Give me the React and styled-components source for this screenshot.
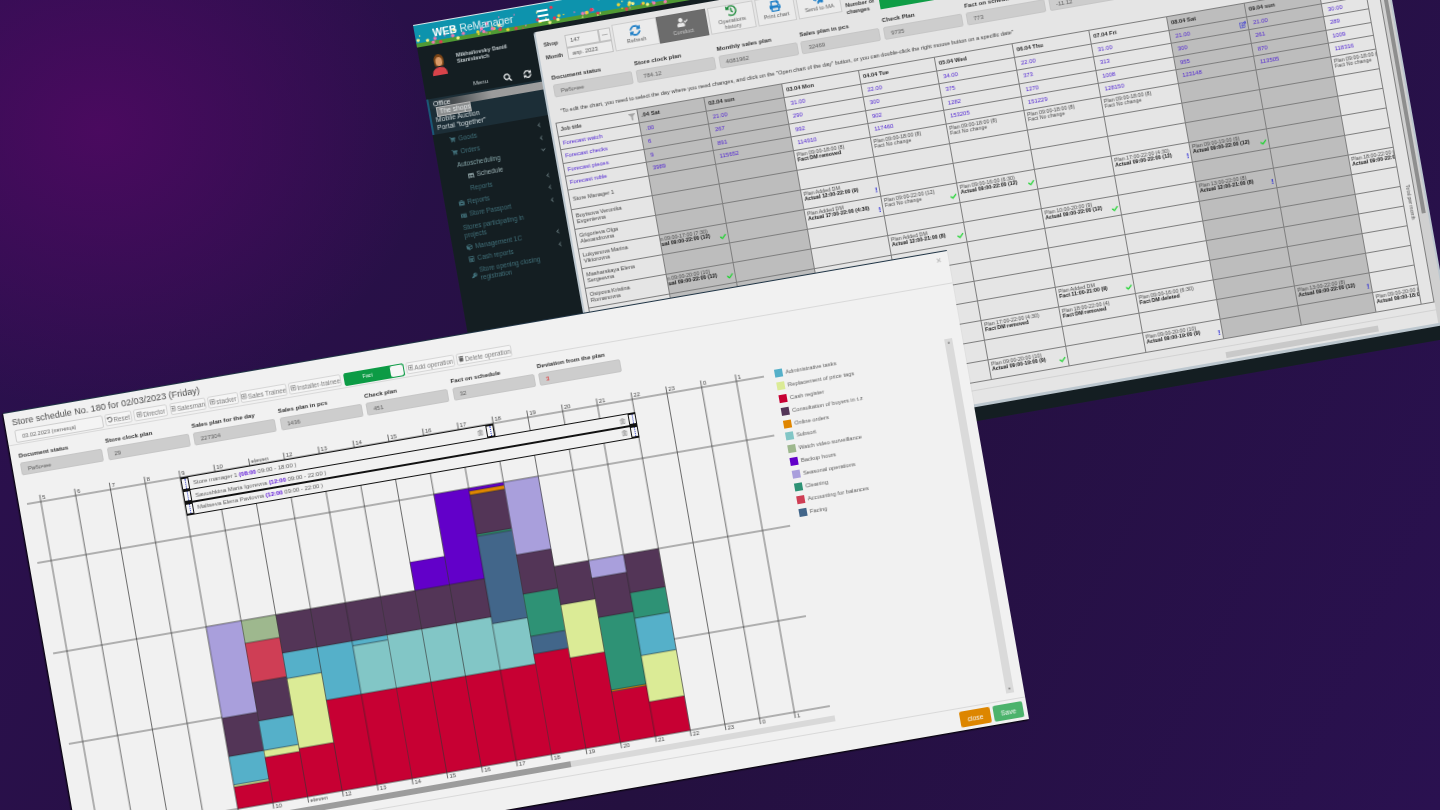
import React from 'react';
import styled, { createGlobalStyle } from 'styled-components';
import {
  FaBriefcase, FaCalculator, FaCheck, FaChevronDown, FaChevronLeft, FaCube, FaFilter, FaHistory, FaIdCard, FaKey,
  FaPaperPlane, FaPrint, FaRegEdit, FaRegPlusSquare, FaRegTrashAlt, FaSearch, FaShoppingCart, FaSyncAlt, FaTable,
  FaTrash, FaUndoAlt, FaUserCheck,
} from 'react-icons/fa';

// maps a w x h box onto a four corner quad (the windows lie tilted on the canvas)
const quadMatrix = (w, h, [x0, y0, x1, y1, x2, y2, x3, y3]) => {
  const dx1 = x1 - x2, dx2 = x3 - x2, sx = x0 - x1 + x2 - x3;
  const dy1 = y1 - y2, dy2 = y3 - y2, sy = y0 - y1 + y2 - y3;
  const den = dx1 * dy2 - dx2 * dy1;
  const g = (sx * dy2 - dx2 * sy) / den;
  const k = (dx1 * sy - sx * dy1) / den;
  const a = x1 - x0 + g * x1, b = x3 - x0 + k * x3;
  const d = y1 - y0 + g * y1, e = y3 - y0 + k * y3;
  return `matrix3d(${a / w},${d / w},0,${g / w},${b / h},${e / h},0,${k / h},0,0,1,0,${x0},${y0},0,1)`;
};

const BACK_W = 968;
const BACK_H = 488;
const FRONT_W = 957;
const FRONT_H = 478;
const backMatrix = quadMatrix(BACK_W, BACK_H, [413, 25, 1366, -141, 1451, 338, 498, 505]);
const frontMatrix = quadMatrix(FRONT_W, FRONT_H, [3, 413, 946.7, 250, 1029, 719, 85, 883]);

const GlobalStyle = createGlobalStyle`
  html, body { margin: 0; height: 100%; overflow: hidden; }
  body { font-family: "Liberation Sans", Arial, sans-serif; }
  * { box-sizing: border-box; }
`;

const Desktop = styled.div`
  position: relative;
  width: 100vw;
  height: 100vh;
  overflow: hidden;
  background:
    radial-gradient(ellipse 330px 280px at 100px 130px, #4a0a5f 0%, rgba(74, 10, 95, 0) 100%),
    linear-gradient(115deg, #2c1050 0%, #24103f 55%, #2a1150 100%);
`;

const BackWindow = styled.div`
  position: absolute;
  left: 0;
  top: 0;
  width: ${BACK_W}px;
  height: ${BACK_H}px;
  transform-origin: 0 0;
  transform: ${backMatrix};
  filter: blur(0.3px);
  background: #141e22;
  display: flex;
  flex-direction: column;
`;

const HeaderBar = styled.div`
  position: relative;
  height: 23px;
  flex: none;
  overflow: hidden;
  background: #0d93ad;
  border-top: 1px solid #d8e6e8;
  display: flex;
  align-items: flex-start;
`;

const Meadow = styled.svg`
  position: absolute;
  left: 0;
  bottom: 0;
`;

const Brand = styled.div`
  position: relative;
  margin: 4px 0 0 18px;
  width: 106px;
  font-size: 10.4px;
  line-height: 14px;
  color: #e4f1f4;
  white-space: nowrap;
  b { font-weight: 700; color: #fff; }
`;

const Burger = styled.div`
  position: relative;
  margin-top: 6px;
  width: 11px;
  height: 12px;
  display: flex;
  flex-direction: column;
  justify-content: space-between;
  span { display: block; height: 2.4px; background: #fff; }
`;

const Main = styled.div`
  display: flex;
  height: 451px;
  flex: none;
`;

const Sidebar = styled.div`
  width: 117px;
  flex: none;
  background: #141e22;
`;

const UserBlock = styled.div`
  display: flex;
  height: 37px;
  padding: 9px 0 0 10px;
  gap: 10px;
`;

const NameText = styled.div`
  font-size: 5.6px;
  line-height: 6.4px;
  font-weight: 700;
  color: #c4cdd0;
  padding-top: 2px;
`;

const MenuBar = styled.div`
  height: 16px;
  display: flex;
  align-items: center;
  padding-left: 49px;
  font-size: 6px;
  color: #c4cdd0;
  span { width: 31px; }
  svg { color: #eef1f2; font-size: 8px; }
  svg + svg { margin-left: 12px; }
`;

const OfficeGroup = styled.div`
  height: 36px;
  padding-left: 4px;
  background: #1c2e37;
  border-left: 2px solid #1a5776;
  font-size: 6.8px;
  line-height: 7.9px;
  color: #d0d8db;
  padding-top: 2px;
`;

const OfficeLine = styled.div`
  margin-left: -4px;
  padding-left: 4px;
  background: linear-gradient(90deg, #1c2e37 0%, #4a4f52 22%, #9b9b9b 55%, #9e9e9e 100%);
  color: #e2e6e8;
`;

const ShopsLine = styled.div`
  margin-left: 3px;
  padding-left: 2px;
  width: 33px;
  white-space: nowrap;
  background: #8a8d8e;
  color: #e8ebec;
  outline: 0.5px solid #b5b5b5;
`;

const NavGap = styled.div`
  height: 2px;
`;

const NavItem = styled.div`
  display: flex;
  align-items: center;
  height: ${(p) => p.$h || 12.7}px;
  padding-left: ${(p) => p.$indent}px;
  padding-right: 8px;
  font-size: 6.4px;
  line-height: 8px;
  color: ${(p) => p.$color || '#41707a'};
  > svg { flex: none; font-size: 5.8px; margin-right: 3px; }
  span { flex: 1; }
`;

const NavChevron = styled.i`
  display: flex;
  font-size: 5px;
  color: #73868a;
`;

const Content = styled.div`
  position: relative;
  flex: 1;
  display: flex;
  margin-top: 5px;
  background: #e5e5e5;
  border-top-left-radius: 3px;
  border-left: 2px solid #bcc7cf;
  border-bottom: 3px solid #bcc7cf;
  border-right: 2px solid #bcc7cf;
`;

const ContentMain = styled.div`
  flex: 1;
  min-width: 0;
`;

const ToolRow = styled.div`
  display: flex;
  align-items: flex-end;
  height: 33px;
  padding-left: 6px;
`;

const ShopForm = styled.div`
  display: grid;
  grid-template-columns: 22px 24px 10px 12px;
  grid-auto-rows: 12.5px;
  width: 68px;
  margin-right: 2px;
  font-size: 5.8px;
  font-weight: 700;
  color: #333;
  align-items: center;
`;

const TinyInput = styled.div`
  grid-column: ${(p) => p.$col};
  height: 100%;
  display: flex;
  align-items: center;
  justify-content: ${(p) => (p.$center ? 'center' : 'flex-start')};
  padding-left: ${(p) => (p.$center ? 0 : 4)}px;
  border: 1px solid #c2c2c2;
  background: #ececec;
  font-weight: 400;
  color: #555;
`;

const ToolButton = styled.div`
  width: ${(p) => p.$w}px;
  height: 27px;
  flex: none;
  display: flex;
  flex-direction: column;
  align-items: center;
  justify-content: center;
  gap: 2px;
  margin-right: ${(p) => p.$gap || 0}px;
  border: 1px solid ${(p) => (p.$dark ? '#6a6a6a' : '#cdcdcd')};
  background: ${(p) => (p.$dark ? '#6c6c6c' : '#ebebeb')};
  color: ${(p) => (p.$dark ? '#c8c8c8' : '#5f5f5f')};
  font-size: 5.7px;
  line-height: 5.6px;
  text-align: center;
  svg { font-size: 11px; color: ${(p) => p.$tone}; flex: none; }
`;

const ChangesLabel = styled.div`
  width: 34px;
  margin: 0 0 -4px 4px;
  flex: none;
  font-size: 5.8px;
  line-height: 6.4px;
  font-weight: 700;
  color: #333;
`;

const GreenPill = styled.div`
  width: 65px;
  height: 14px;
  margin-bottom: -4px;
  background: #0f9d46;
`;

const FieldRow = styled.div`
  display: flex;
  gap: ${(p) => p.$gap}px;
  margin: ${(p) => p.$top}px 0 0 ${(p) => p.$left}px;
`;

const Field = styled.div`
  width: ${(p) => p.$w}px;
  flex: none;
`;

const FieldLabel = styled.div`
  height: 8px;
  line-height: 8px;
  font-size: 6.2px;
  font-weight: 700;
  color: #2e2e2e;
  margin-bottom: 3px;
  white-space: nowrap;
`;

const FieldBox = styled.div`
  height: 13px;
  padding-left: 6px;
  display: flex;
  align-items: center;
  border-radius: 2px;
  border: 1px solid #c6c6c6;
  background: #cdcdcd;
  font-size: 6px;
  color: ${(p) => p.$color || '#5c5c5c'};
`;

const HintText = styled.div`
  margin: 10px 0 0 11px;
  font-size: 5.64px;
  line-height: 8px;
  color: #383838;
  white-space: nowrap;
`;

const Table = styled.table`
  border-collapse: collapse;
  table-layout: fixed;
  width: 834px;
  margin: 7px 0 0 4px;
  font-size: 5.5px;
  td { border: 0.7px solid #7e7e7e; padding: 0; height: 20px; }
  td.slim { height: 13.5px; }
`;

const DayHead = styled.td`
  background: ${(p) => (p.$off ? '#bdbdbd' : '#e5e5e5')};
  font-size: 5.8px;
  font-weight: 700;
  color: #262626;
  padding-left: 3px !important;
  overflow: hidden;
  white-space: nowrap;
`;

const JobCell = styled.td`
  position: relative;
  padding-left: 3px !important;
  background: #e5e5e5;
  font-size: ${(p) => (p.$link ? 5.9 : 5.6)}px;
  line-height: 6.4px;
  font-weight: ${(p) => (p.$bold ? 700 : 400)};
  color: ${(p) => (p.$link ? '#4c1fd2' : '#454545')};
  overflow: hidden;
  white-space: pre-line;
  svg { position: absolute; right: 2px; top: 3px; color: #a5a5a5; font-size: 7px; }
`;

const NumCell = styled.td`
  position: relative;
  background: ${(p) => (p.$off ? '#bdbdbd' : '#e5e5e5')};
  padding-left: 5px !important;
  font-size: 5.9px;
  color: #4c1fd2;
  overflow: hidden;
  white-space: nowrap;
  svg { position: absolute; right: 1px; top: 3px; color: #2a2ad4; font-size: 7px; }
`;

const ShiftCell = styled.td`
  position: relative;
  vertical-align: top;
  background: ${(p) => (p.$off ? '#bdbdbd' : '#e5e5e5')};
  overflow: hidden;
  white-space: nowrap;
`;

const ShiftText = styled.div`
  margin: 2px 0 0 ${(p) => (p.$cut ? -8 : 2)}px;
  font-size: 5.3px;
  line-height: 5.9px;
  color: #4a4a4a;
  b { display: block; font-weight: ${(p) => (p.$plain ? 400 : 700)}; color: ${(p) => (p.$plain ? '#4a4a4a' : '#111')}; }
`;

const OkMark = styled(FaCheck)`
  position: absolute;
  right: 1.5px;
  bottom: 3px;
  font-size: 6.4px;
  color: #17d42a;
`;

const WarnMark = styled.span`
  position: absolute;
  right: 1.5px;
  bottom: 3px;
  font-size: 7.5px;
  line-height: 7px;
  font-weight: 700;
  color: #2424d8;
`;

const TotalCell = styled.td`
  position: relative;
  background: #e5e5e5;
`;

const TotalText = styled.span`
  position: absolute;
  left: 4px;
  top: 207px;
  writing-mode: vertical-rl;
  font-size: 5.2px;
  color: #555;
  white-space: nowrap;
`;

const FootRule = styled.div`
  margin-top: 7px;
  border-top: 1px solid #d2d2d2;
`;

const BackThumb = styled.div`
  width: 155px;
  height: 6px;
  margin: 5px 0 0 624px;
  background: #c9c9c9;
`;

const BackTrack = styled.div`
  width: 9px;
  flex: none;
  background: #d0d0d0;
  padding-left: 3px;
  div { width: 4px; height: 332px; background: #8e8e8e; }
`;

// the dialog on top
const FrontWindow = styled.div`
  position: absolute;
  left: 0;
  top: 0;
  width: ${FRONT_W}px;
  height: ${FRONT_H}px;
  transform-origin: 0 0;
  transform: ${frontMatrix};
  filter: blur(0.3px);
  background: #f1f1f1;
  border-top: 1px solid #1f3445;
  box-shadow: -1px 1px 1.5px #000;
  display: flex;
  flex-direction: column;
`;

const CloseX = styled.span`
  position: absolute;
  right: 7px;
  top: 3px;
  font-size: 9px;
  line-height: 10px;
  color: #a9a9a9;
`;

const TopBar = styled.div`
  height: 33px;
  flex: none;
  display: flex;
  align-items: flex-end;
  padding: 0 0 1px 8px;
  border-bottom: 1px solid #d9d9d9;
  gap: 2px;
`;

const TitleBlock = styled.div`
  width: 89px;
  flex: none;
`;

const Title = styled.div`
  font-size: 9.1px;
  line-height: 11px;
  color: #4a4a4a;
  white-space: nowrap;
  margin: 0 0 2px -1px;
`;

const DateInput = styled.div`
  height: 13px;
  padding-left: 6px;
  display: flex;
  align-items: center;
  border: 1px solid #cfcfcf;
  border-radius: 2px;
  background: #f4f4f4;
  font-size: 5.6px;
  color: #666;
`;

const RoleRow = styled.div`
  display: flex;
  gap: 2.3px;
  align-items: flex-start;
  height: 13px;
`;

const RoleButton = styled.div`
  width: ${(p) => p.$w}px;
  height: 12px;
  flex: none;
  display: flex;
  align-items: center;
  justify-content: center;
  gap: 1px;
  border: 1px solid #d6d6d6;
  border-radius: 2px;
  background: #f5f5f5;
  font-size: 6.3px;
  color: #7c7c7c;
  white-space: nowrap;
  overflow: hidden;
  svg { font-size: 5.6px; flex: none; color: #5f5f5f; }
`;

const FactToggle = styled.div`
  width: 61px;
  height: 12.5px;
  flex: none;
  display: flex;
  align-items: center;
  border: 1px solid #0c9b45;
  border-radius: 2px;
  background: #0c9b45;
  font-size: 5.2px;
  color: #eaf7ee;
  span { flex: 1; text-align: center; }
  i { display: block; width: 13px; height: 10.5px; background: #f6f6f6; border-radius: 2px; }
`;

const Body = styled.div`
  position: relative;
  flex: 1;
  min-height: 0;
  margin-top: 7px;
  display: flex;
`;

const ChartColumn = styled.div`
  position: relative;
  width: 766px;
  flex: none;
`;

const ChartSvg = styled.svg`
  display: block;
  text { font-family: "Liberation Sans", Arial, sans-serif; font-size: 6px; fill: #4a4a4a; }
`;

const HScroll = styled.div`
  position: relative;
  height: 6px;
  margin: -3px 0 0 8px;
  background: #d9d9d9;
  div { position: absolute; left: 160px; top: 0; width: 330px; height: 6px; background: #9c9c9c; }
`;

const RowStack = styled.div`
  position: absolute;
  left: 163px;
  top: ${(p) => p.$top}px;
`;

const StaffRow = styled.div`
  display: flex;
  align-items: center;
  width: ${(p) => p.$w}px;
  height: 13.6px;
  background: #f1f1f1;
  border-top: 0.8px solid #111;
  border-bottom: 0.8px solid #111;
  margin-bottom: -0.8px;
  font-size: 6px;
  color: #5c5c5c;
  white-space: nowrap;
  b { color: #5a10d8; }
  span { flex: 1; padding-left: 4px; }
  > svg { flex: none; font-size: 6px; color: #808080; margin-right: 3px; }
`;

const Grip = styled.div`
  width: 8px;
  align-self: stretch;
  flex: none;
  border: 0.8px solid #111;
  background: #f6f6f6;
  display: flex;
  justify-content: center;
  &::after { content: ''; border-left: 1.4px dotted #2f3fc8; }
`;

const Legend = styled.div`
  width: 160px;
  flex: none;
  padding-top: 14.5px;
`;

const LegendItem = styled.div`
  display: flex;
  align-items: center;
  gap: 3px;
  height: 12.9px;
  font-size: 5.8px;
  color: #5c5c5c;
  white-space: nowrap;
  i { display: block; width: 8px; height: 8px; background: ${(p) => p.$color}; }
`;

const VScroll = styled.div`
  width: 8px;
  flex: none;
  margin: 16px 0 6px 13px;
  background: #dadada;
  display: flex;
  flex-direction: column;
  justify-content: space-between;
  align-items: center;
  font-size: 4px;
  line-height: 8px;
  color: #777;
`;

const Footer = styled.div`
  flex: none;
  display: flex;
  justify-content: flex-end;
  gap: 3px;
  padding: 3px 4px 3px;
  border-top: 1px solid #d9d9d9;
`;

const FootButton = styled.div`
  width: ${(p) => p.$w}px;
  height: 16px;
  display: flex;
  align-items: center;
  justify-content: center;
  border-radius: 2px;
  background: ${(p) => p.$bg};
  font-size: 6.8px;
  color: #f6f6f6;
`;

const flowers = Array.from({ length: 300 }, (_, i) => {
  const r = (n) => { const s = Math.sin(i * 12.9898 + n * 78.233) * 43758.5453; return s - Math.floor(s); };
  return {
    x: r(1) * BACK_W,
    y: r(2) < 0.82 ? 14 + r(3) * 7 : 2 + r(3) * 11,
    color: ['#e23a55', '#e6d23a', '#f07ab0', '#f4f08a'][Math.floor(r(4) * 4)],
    big: r(5) > 0.45 ? 1.7 : 0.8,
  };
});

const navItems = [
  { label: 'Goods', indent: 16, Icon: FaShoppingCart, more: 'left' },
  { label: 'Orders', indent: 16, Icon: FaShoppingCart, more: 'left' },
  { label: 'Autoscheduling', indent: 19, color: '#84a3a6', more: 'down' },
  { label: 'Schedule', indent: 28, color: '#9db2b5', Icon: FaTable },
  { label: 'Reports', indent: 28, more: 'left' },
  { label: 'Reports', indent: 14, Icon: FaBriefcase, more: 'left' },
  { label: 'Store Passport', indent: 14, Icon: FaIdCard, more: 'left' },
  { label: ['Stores participating in', 'projects'], indent: 14, h: 19.5 },
  { label: 'Management 1C', indent: 14, Icon: FaCube, more: 'left' },
  { label: 'Cash reports', indent: 14, Icon: FaCalculator, more: 'left' },
  { label: ['Store opening closing', 'registration'], indent: 14, Icon: FaKey, h: 19.5 },
];

const backFields = [
  ['Document status', 'Рабочее'], ['Store clock plan', '784.12'], ['Monthly sales plan', '4081962'], ['Sales plan in pcs', '32469'],
  ['Check Plan', '9735'], ['Fact on schedule', '773'], ['Deviation from the plan', '-11.12'],
];

const frontFields = [
  ['Document status', 'Рабочее'], ['Store clock plan', '29'], ['Sales plan for the day', '227304'], ['Sales plan in pcs', '1436'],
  ['Check plan', '451'], ['Fact on schedule', '32'], ['Deviation from the plan', '3', '#e01818'],
];

const colWidths = [82, 68, 79, 78, 77, 79, 78, 79, 79, 76, 46, 13];
const days = ['01.04 Sat', '02.04 sun', '03.04 Mon', '04.04 Tue', '05.04 Wed', '06.04 Thu', '07.04 Fri', '08.04 Sat', '09.04 sun', '10.04 Mon'];
const offDays = [0, 1, 7, 8];

const forecast = [
  ['Forecast watch', '21.00', '21.00', '31.00', '22.00', '34.00', '22.00', '31.00', '21.00', '21.00', '30.00'],
  ['Forecast checks', '316', '267', '290', '300', '375', '373', '313', '300', '261', '289'],
  ['Forecast pieces', '919', '891', '992', '902', '1282', '1270', '1008', '955', '870', '1009'],
  ['Forecast ruble', '113989', '115652', '114910', '117460', '153205', '151229', '128150', '123148', '113505', '118316'],
];

const staff = [
  'Store Manager 1', 'Boytsova Veronika\nEvgenievna', 'Grigorieva Olga\nAlexandrovna', 'Lukyanova Marina\nViktorovna',
  'Masharskaya Elena\nSergeevna', 'Osipova Kristina\nRomanovna', '', '', '', '', '', '', '',
];

const noChange = ['Plan 09:00-18:00 (8)', 'Fact No change', null, true];
const shifts = {
  '0-2': ['Plan 09:00-18:00 (8)', 'Fact DM removed'],
  '0-3': noChange, '0-4': noChange, '0-5': noChange, '0-6': noChange, '0-9': noChange,
  '2-2': ['Plan Added DM', 'Actual 12:00-22:00 (9)', 'warn'],
  '3-0': ['Plan 09:00-17:00 (7:30)', 'Actual 09:00-22:00 (12)', 'ok'],
  '3-2': ['Plan Added DM', 'Actual 17:00-22:00 (4:30)', 'warn'],
  '3-3': ['Plan 09:00-22:00 (12)', 'Fact No change', 'ok', true],
  '3-4': ['Plan 09:00-16:00 (6:30)', 'Actual 09:00-22:00 (12)', 'ok'],
  '3-6': ['Plan 17:00-22:00 (4:30)', 'Actual 09:00-22:00 (12)', 'warn'],
  '3-7': ['Plan 09:00-19:00 (9)', 'Actual 09:00-22:00 (12)', 'ok'],
  '5-0': ['Plan 09:00-20:00 (10)', 'Actual 09:00-22:00 (12)', 'ok'],
  '5-3': ['Plan Added DM', 'Actual 12:00-21:00 (8)', 'ok'],
  '5-5': ['Plan 10:00-20:00 (9)', 'Actual 09:00-22:00 (12)', 'ok'],
  '5-7': ['Plan 13:00-22:00 (8)', 'Actual 12:00-21:00 (8)', 'warn'],
  '5-9': ['Plan 18:00-22:00 (4)', 'Actual 09:00-22:00 (12)'],
  '9-5': ['Plan Added DM', 'Fact 11:00-21:00 (9)', 'ok'],
  '10-4': ['Plan 17:00-22:00 (4:30)', 'Fact DM removed'],
  '10-5': ['Plan 18:00-22:00 (4)', 'Fact DM removed'],
  '10-6': ['Plan 09:00-16:00 (6:30)', 'Fact DM deleted'],
  '11-8': ['Plan 13:00-22:00 (8)', 'Actual 09:00-22:00 (12)', 'warn'],
  '12-4': ['Plan 09:00-20:00 (10)', 'Actual 09:00-19:00 (9)', 'ok'],
  '12-6': ['Plan 09:00-20:00 (10)', 'Actual 09:00-19:00 (9)', 'warn'],
  '12-9': ['Plan 09:00-20:00 (10)', 'Actual 09:00-18:00 (9)'],
};

const tone = {
  admin: '#55b0c9', tags: '#dbeb96', cash: '#c70033', consult: '#533557', online: '#e08600', subsort: '#82c6c6',
  video: '#9eb88e', backup: '#6200c9', season: '#a99fdc', clean: '#2e9275', balance: '#cf3e55', facing: '#42668a',
};

const legend = [
  ['Administrative tasks', tone.admin], ['Replacement of price tags', tone.tags], ['Cash register', tone.cash],
  ['Consultation of buyers in t.z', tone.consult], ['Online orders', tone.online], ['Subsort', tone.subsort],
  ['Watch video surveillance', tone.video], ['Backup hours', tone.backup], ['Seasonal operations', tone.season],
  ['Cleaning', tone.clean], ['Accounting for balances', tone.balance], ['Facing', tone.facing],
];

const CHART_TOP = 72;
const BASE = 431;
const hourX = (i) => 22 + 35.25 * i;
const hourName = (i) => { const h = (5 + i) % 24; return h === 11 ? 'eleven' : String(h); };

// hour index -> [colour, top edge, bottom edge] measured on the window
const bars = [
  [4, [['season', 246, 339], ['consult', 339, 378], ['admin', 378, 407], ['tags', 407, 409], ['cash', 409, BASE]]],
  [5, [['video', 246, 269], ['balance', 269, 309], ['consult', 309, 348], ['admin', 348, 378], ['tags', 378, 385], ['cash', 385, BASE]]],
  [6, [['consult', 246, 285], ['admin', 285, 311], ['tags', 311, 382], ['cash', 382, BASE]]],
  [7, [['consult', 246, 285], ['admin', 285, 339], ['cash', 339, BASE]]],
  [8, [['consult', 246, 285], ['admin', 285, 290], ['subsort', 290, 339], ['cash', 339, BASE]]],
  [9, [['consult', 246, 285], ['subsort', 285, 339], ['cash', 339, BASE]]],
  [10, [['backup', 217, 246], ['consult', 246, 285], ['subsort', 285, 339], ['cash', 339, BASE]]],
  [11, [['backup', 154, 246], ['consult', 246, 285], ['subsort', 285, 339], ['cash', 339, BASE]]],
  [12, [['backup', 154, 157], ['online', 157, 161], ['consult', 161, 201], ['clean', 201, 203], ['facing', 203, 292], ['subsort', 292, 339], ['cash', 339, BASE]]],
  [13, [['season', 154, 228], ['consult', 228, 268], ['clean', 268, 311], ['facing', 311, 329], ['cash', 329, BASE]]],
  [14, [['consult', 246, 285], ['tags', 285, 339], ['cash', 339, BASE]]],
  [15, [['season', 246, 264], ['consult', 264, 304], ['clean', 304, 378], ['online', 378, 379.5], ['cash', 379.5, BASE]]],
  [16, [['consult', 246, 285], ['clean', 285, 311], ['admin', 311, 349], ['tags', 349, 396], ['cash', 396, BASE]]],
];

const Avatar = () => (
  <svg width="17" height="22" viewBox="0 0 17 22">
    <path d="M4 8c0-5 2.500-7 5-7s5 2 5 7c0 3-1 5-1 5H5s-1-2-1-5z" fill="#7a4416" />
    <ellipse cx="9" cy="8.500" rx="3.400" ry="4.500" fill="#d99a68" />
    <path d="M1 22c0-5 3-8 8-8s7 3 7 8z" fill="#d8434a" />
  </svg>
);

const Chart = () => {
  const y = (v) => v - CHART_TOP;
  return (
    <ChartSvg width="766" height="372" viewBox="0 0 766 372">
      {[94, 154, 246, 338, BASE].map((v) => (
        <line key={v} x1="8" x2={v === BASE ? 763 : 755} y1={y(v)} y2={y(v)} stroke="#333" strokeWidth="0.7" />
      ))}
      {Array.from({ length: 21 }, (_, i) => (
        <g key={i}>
          <line x1={hourX(i)} x2={hourX(i)} y1={y(87)} y2={y(BASE + 6)} stroke="#333" strokeWidth="0.7" />
          <text x={hourX(i) + 2} y={y(92)}>{hourName(i)}</text>
          {i >= 5 && <text x={hourX(i) + 2} y={y(BASE + 6.500)}>{hourName(i)}</text>}
        </g>
      ))}
      {bars.map(([i, parts]) => parts.map(([key, top, bottom]) => (
        <rect
          key={`${i}-${top}`}
          x={hourX(i)}
          y={y(top)}
          width="35.250"
          height={bottom - top}
          fill={tone[key]}
          stroke="#2b2b2b"
          strokeWidth="0.4"
        />
      )))}
    </ChartSvg>
  );
};

const App = () => (
  <Desktop>
    <GlobalStyle />
    <BackWindow>
      <HeaderBar>
        <Meadow width={BACK_W} height="22" viewBox={`0 0 ${BACK_W} 22`}>
          <rect x="0" y="18" width={BACK_W} height="4" fill="#4f9a34" />
          {flowers.map((f, i) => <circle key={i} cx={f.x} cy={f.y} r={f.big} fill={f.color} />)}
        </Meadow>
        <Brand><b>WEB</b> ReManager</Brand>
        <Burger><span /><span /><span /></Burger>
      </HeaderBar>
      <Main>
        <Sidebar>
          <UserBlock>
            <Avatar />
            <NameText>Mikhailovsky Daniil<br />Stanislavich</NameText>
          </UserBlock>
          <MenuBar><span>Menu</span><FaSearch /><FaSyncAlt /></MenuBar>
          <OfficeGroup>
            <OfficeLine>Office</OfficeLine>
            <ShopsLine>The shops</ShopsLine>
            <div>Mobile Auction</div>
            <div>Portal "together"</div>
          </OfficeGroup>
          <NavGap />
          {navItems.map((item, i) => {
            const Icon = item.Icon;
            return (
              <NavItem key={i} $indent={item.indent} $color={item.color} $h={item.h}>
                {Icon && <Icon />}
                <span>{Array.isArray(item.label) ? <>{item.label[0]}<br />{item.label[1]}</> : item.label}</span>
                {item.more && <NavChevron>{item.more === 'down' ? <FaChevronDown /> : <FaChevronLeft />}</NavChevron>}
              </NavItem>
            );
          })}
        </Sidebar>
        <Content>
          <ContentMain>
            <ToolRow>
              <ShopForm>
                <span>Shop</span>
                <TinyInput $col="2 / 4">147</TinyInput>
                <TinyInput $col="4" $center>—</TinyInput>
                <span>Month</span>
                <TinyInput $col="2 / 5">апр. 2023</TinyInput>
              </ShopForm>
              <ToolButton $w={45} $tone="#1f7fc7"><FaSyncAlt />Refresh</ToolButton>
              <ToolButton $w={50} $dark $gap={2} $tone="#e9e9e9"><FaUserCheck />Conduct</ToolButton>
              <ToolButton $w={46} $gap={2} $tone="#1c8a3a"><FaHistory />Operations history</ToolButton>
              <ToolButton $w={39} $gap={2} $tone="#1f7fc7"><FaPrint />Print chart</ToolButton>
              <ToolButton $w={44} $tone="#1f7fc7"><FaPaperPlane />Send to MA</ToolButton>
              <ChangesLabel>Number of changes</ChangesLabel>
              <GreenPill />
            </ToolRow>
            <FieldRow $gap={3.800} $top={11} $left={8}>
              {backFields.map(([label, value]) => (
                <Field key={label} $w={80}>
                  <FieldLabel>{label}</FieldLabel>
                  <FieldBox>{value}</FieldBox>
                </Field>
              ))}
            </FieldRow>
            <HintText>"To edit the chart, you need to select the day where you need changes, and click on the "Open chart of the day" button, or you can double-click the right mouse button on a specific date"</HintText>
            <Table>
              <colgroup>{colWidths.map((w, i) => <col key={i} style={{ width: w }} />)}</colgroup>
              <tbody>
                <tr>
                  <JobCell $bold className="slim">Job title<FaFilter /></JobCell>
                  {days.map((d, i) => (
                    <DayHead key={d} className="slim" $off={offDays.includes(i)}>
                      {i === 0 ? d.slice(2) : d}
                    </DayHead>
                  ))}
                  <TotalCell rowSpan={18}><TotalText>Total per month</TotalText></TotalCell>
                </tr>
                {forecast.map(([title, ...vals]) => (
                  <tr key={title}>
                    <JobCell $link className="slim">{title}</JobCell>
                    {vals.map((v, i) => (
                      <NumCell key={i} className="slim" $off={offDays.includes(i)}>
                        {i === 0 ? v.slice(-Math.max(v.length - 2, 1)) : v}
                        {i === 7 && title === 'Forecast watch' && <FaRegEdit />}
                      </NumCell>
                    ))}
                  </tr>
                ))}
                {staff.map((name, r) => (
                  <tr key={r}>
                    <JobCell>{name}</JobCell>
                    {days.map((d, c) => {
                      const s = shifts[`${r}-${c}`];
                      return (
                        <ShiftCell key={d} $off={offDays.includes(c)}>
                          {s && (
                            <>
                              <ShiftText $cut={c === 0} $plain={s[3]}>{s[0]}<b>{s[1]}</b></ShiftText>
                              {s[2] === 'ok' && <OkMark />}
                              {s[2] === 'warn' && <WarnMark>!</WarnMark>}
                            </>
                          )}
                        </ShiftCell>
                      );
                    })}
                  </tr>
                ))}
              </tbody>
            </Table>
            <FootRule />
            <BackThumb />
          </ContentMain>
          <BackTrack><div /></BackTrack>
        </Content>
      </Main>
    </BackWindow>

    <FrontWindow>
      <CloseX>×</CloseX>
      <TopBar>
        <TitleBlock>
          <Title>Store schedule No. 180 for 02/03/2023 (Friday)</Title>
          <DateInput>03.02.2023 (пятница)</DateInput>
        </TitleBlock>
        <RoleRow>
          <RoleButton $w={27}><FaUndoAlt />Reset</RoleButton>
          <RoleButton $w={34}><FaRegPlusSquare />Director</RoleButton>
          <RoleButton $w={36}><FaRegPlusSquare />Salesman</RoleButton>
          <RoleButton $w={31}><FaRegPlusSquare />stacker</RoleButton>
          <RoleButton $w={47}><FaRegPlusSquare />Sales Trainee</RoleButton>
          <RoleButton $w={53}><FaRegPlusSquare />Installer-trainee</RoleButton>
          <FactToggle><span>Fact</span><i /></FactToggle>
          <RoleButton $w={49}><FaRegPlusSquare />Add operation</RoleButton>
          <RoleButton $w={56}><FaTrash />Delete operation</RoleButton>
        </RoleRow>
      </TopBar>
      <FieldRow $gap={4.500} $top={7} $left={8}>
        {frontFields.map(([label, value, color]) => (
          <Field key={label} $w={83}>
            <FieldLabel>{label}</FieldLabel>
            <FieldBox $color={color}>{value}</FieldBox>
          </Field>
        ))}
      </FieldRow>
      <Body>
        <ChartColumn>
          <Chart />
          <RowStack $top={94 - CHART_TOP}>
            <StaffRow $w={317}>
              <Grip /><span>Store manager 1 <b>(08:00</b> 09:00 - 18:00 )</span><FaRegTrashAlt /><Grip />
            </StaffRow>
            <StaffRow $w={459}>
              <Grip /><span>Savushkina Maria Igorevna <b>(12:00</b> 09:00 - 22:00 )</span><FaRegTrashAlt /><Grip />
            </StaffRow>
            <StaffRow $w={459}>
              <Grip /><span>Maltseva Elena Pavlovna <b>(12:00</b> 09:00 - 22:00 )</span><FaRegTrashAlt /><Grip />
            </StaffRow>
          </RowStack>
          <HScroll><div /></HScroll>
        </ChartColumn>
        <Legend>
          {legend.map(([label, color]) => (
            <LegendItem key={label} $color={color}><i />{label}</LegendItem>
          ))}
        </Legend>
        <VScroll><span>▲</span><span>▼</span></VScroll>
      </Body>
      <Footer>
        <FootButton $w={31} $bg="#dd8600">close</FootButton>
        <FootButton $w={30} $bg="#4cb36c">Save</FootButton>
      </Footer>
    </FrontWindow>
  </Desktop>
);

export default App;
